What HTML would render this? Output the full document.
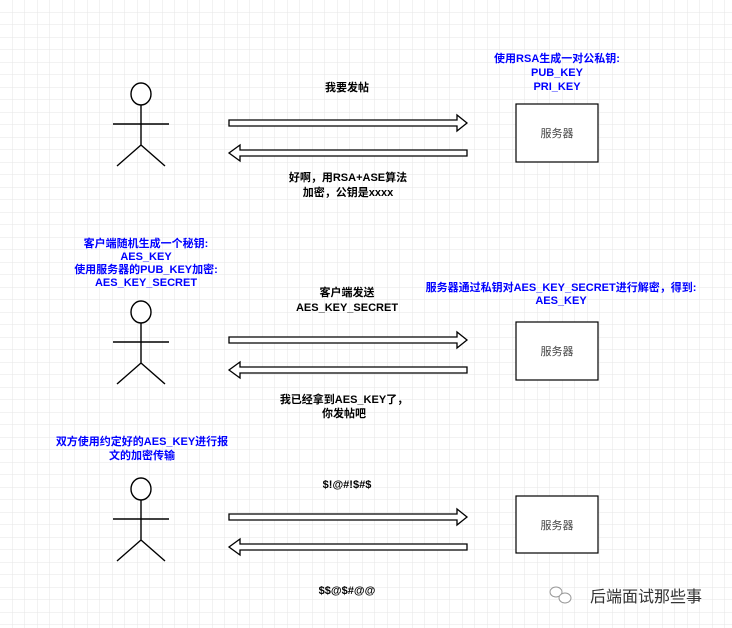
<!DOCTYPE html>
<html><head><meta charset="utf-8"><style>
html,body{margin:0;padding:0;background:#fff;}
svg{display:block}
text{font-family:"Liberation Sans","Noto Sans CJK SC",sans-serif;font-size:11px;font-weight:bold;text-anchor:middle}
.b{fill:#0000ff}
.s{font-weight:normal;fill:#444}
</style></head><body>
<svg width="732" height="628" viewBox="0 0 732 628" xmlns="http://www.w3.org/2000/svg">
<defs>
<pattern id="g" width="12.5" height="12.5" patternUnits="userSpaceOnUse" x="0" y="0">
<path d="M12.5 0V12.5M0 12.5H12.5" stroke="#e6e6e6" stroke-width="1" fill="none"/>
</pattern>
<g id="actor" stroke="#000" stroke-width="1.4" fill="none">
<ellipse cx="0" cy="0" rx="10" ry="11" fill="#fff"/>
<path d="M0 11V51M-28 30H28M0 51L-24 72M0 51L24 72"/>
</g>
<g id="arrows" stroke="#000" stroke-width="1.3" fill="#fff">
<path d="M229 120H457V115L467 123L457 131V126H229Z"/>
<path d="M467 150H240V145L229 153L240 161V156H467Z"/>
</g>
</defs>
<rect width="732" height="628" fill="url(#g)"/>
<use href="#actor" x="141" y="94"/>
<use href="#actor" x="141" y="312"/>
<use href="#actor" x="141" y="489"/>
<use href="#arrows" x="0" y="0"/>
<use href="#arrows" x="0" y="217"/>
<use href="#arrows" x="0" y="394"/>
<g stroke="#000" stroke-width="1.2" fill="#fff">
<rect x="516" y="104" width="82" height="58"/>
<rect x="516" y="322" width="82" height="58"/>
<rect x="516" y="496" width="82" height="57"/>
</g>
<text class="s" x="557" y="137">服务器</text>
<text class="s" x="557" y="355">服务器</text>
<text class="s" x="557" y="529">服务器</text>
<text x="347" y="91">我要发帖</text>
<text class="b" x="557" y="62">使用RSA生成一对公私钥:</text>
<text class="b" x="557" y="76">PUB_KEY</text>
<text class="b" x="557" y="90">PRI_KEY</text>
<text x="348" y="181">好啊，用RSA+ASE算法</text>
<text x="348" y="196">加密，公钥是xxxx</text>
<text class="b" x="146" y="247">客户端随机生成一个秘钥:</text>
<text class="b" x="146" y="260">AES_KEY</text>
<text class="b" x="146" y="273">使用服务器的PUB_KEY加密:</text>
<text class="b" x="146" y="286">AES_KEY_SECRET</text>
<text x="347" y="296">客户端发送</text>
<text x="347" y="311">AES_KEY_SECRET</text>
<text class="b" x="561" y="291">服务器通过私钥对AES_KEY_SECRET进行解密，得到:</text>
<text class="b" x="561" y="304">AES_KEY</text>
<text x="344" y="403">我已经拿到AES_KEY了，</text>
<text x="344" y="417">你发帖吧</text>
<text class="b" x="142" y="445">双方使用约定好的AES_KEY进行报</text>
<text class="b" x="142" y="459">文的加密传输</text>
<text x="347" y="488">$!@#!$#$</text>
<text x="347" y="594">$$@$#@@</text>
<g fill="none" stroke="#999" stroke-width="1">
<ellipse cx="556" cy="592" rx="6" ry="5"/>
<ellipse cx="565" cy="598" rx="6" ry="5" fill="#fff"/>
</g>
<text class="s" x="646" y="602" style="font-size:16px;text-anchor:middle;fill:#333">后端面试那些事</text>
</svg>
</body></html>
